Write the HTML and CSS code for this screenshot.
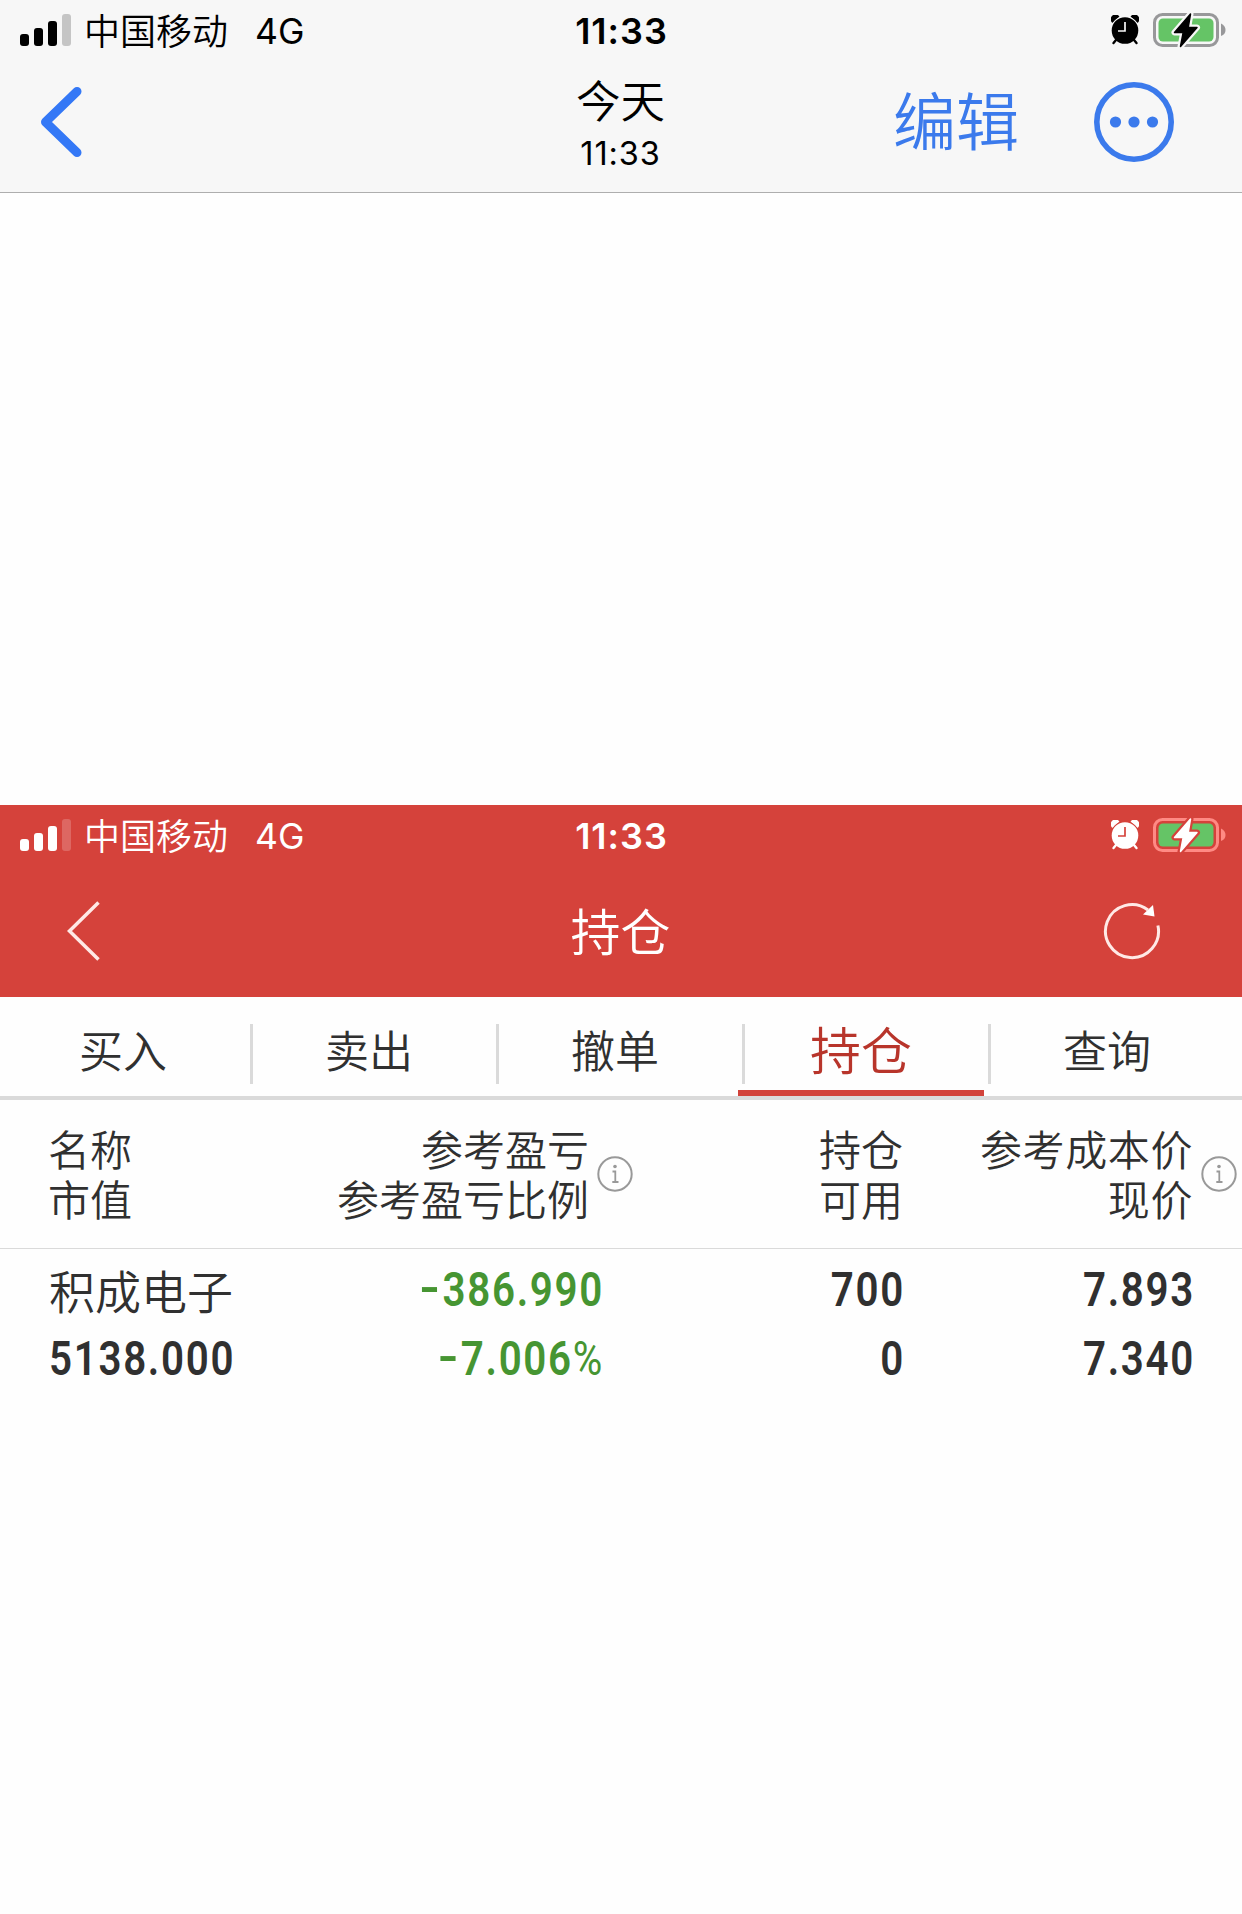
FILE: index.html
```
<!DOCTYPE html>
<html lang="zh-CN">
<head>
  <meta charset="UTF-8">
  <title>持仓</title>
  <link rel="stylesheet" href="styles.css">
</head>
<body>

<!-- shared status bar icons -->
<svg class="sprite">
  <symbol id="signal" viewBox="0 0 51 32">
    <rect x="0" y="20" width="9" height="12" rx="3"/>
    <rect x="14" y="14" width="9" height="18" rx="3"/>
    <rect x="28" y="7" width="9" height="25" rx="3"/>
    <rect x="42" y="0" width="9" height="32" rx="3" opacity="0.2"/>
  </symbol>
  <symbol id="alarm" viewBox="0 0 28 30">
    <path d="M1.500 7A4 4 0 0 1 7.500 1.500ZM26.500 7A4 4 0 0 0 20.500 1.500Z" stroke="currentColor" stroke-width="1.500" stroke-linejoin="round"/>
    <circle class="cut" cx="14" cy="15.500" r="13.600" stroke-width="1.500"/>
    <circle cx="14" cy="15.500" r="13.300"/>
    <path d="M5 25L2.500 28M23 25L25.500 28" stroke="currentColor" stroke-width="2.400" stroke-linecap="round"/>
    <path class="cut" d="M14 7V16H7" stroke-width="1.700"/>
  </symbol>
  <symbol id="battery" viewBox="0 0 76 36">
    <rect class="shell" x="2.500" y="2.500" width="63" height="31" rx="8" fill="none" stroke-width="3"/>
    <path class="tip" d="M69 11.500Q73.500 13.500 73.500 18T69 24Z"/>
    <rect x="6.500" y="6.500" width="55" height="23" rx="4.500" fill="#65c466"/>
    <path class="cut" d="M38.500 2L22.500 20.500H31.200L28.500 34.500L45 15.500H36.200Z" stroke-width="6" stroke-linejoin="round"/>
    <path d="M38.500 2L22.500 20.500H31.200L28.500 34.500L45 15.500H36.200Z" stroke="currentColor" stroke-width="1.500" stroke-linejoin="round"/>
  </symbol>
  <symbol id="info" viewBox="0 0 38 38">
    <circle cx="19" cy="19" r="16.700" fill="none" stroke="#999" stroke-width="2"/>
    <circle cx="19" cy="11.500" r="1.800" fill="#999"/>
    <path d="M16.500 16.500H19.300V27M16.300 27H22.500" fill="none" stroke="#999" stroke-width="1.800"/>
  </symbol>
</svg>

<header class="album">
  <div class="status">
    <div class="carrier">
      <svg class="signal"><use href="#signal"/></svg>
      <span>中国移动</span>
      <span class="network">4G</span>
    </div>
    <div class="clock">11:33</div>
    <div class="power">
      <svg class="alarm"><use href="#alarm"/></svg>
      <svg class="battery"><use href="#battery"/></svg>
    </div>
  </div>
  <div class="album-nav">
    <svg class="album-back" viewBox="0 0 48 76"><path d="M39 7.500L7.500 38L39 68.500"/></svg>
    <div class="album-title">
      <div class="day">今天</div>
      <div class="time">11:33</div>
    </div>
    <div class="album-actions">
      <span class="edit">编辑</span>
      <svg class="more" viewBox="0 0 80 80">
        <circle cx="40" cy="40" r="37.200" fill="none" stroke="#3b7aec" stroke-width="5.600"/>
        <circle cx="21.500" cy="40" r="5.600"/>
        <circle cx="40" cy="40" r="5.600"/>
        <circle cx="58.500" cy="40" r="5.600"/>
      </svg>
    </div>
  </div>
</header>

<main class="photo">
  <header class="app-head">
    <div class="status">
      <div class="carrier">
        <svg class="signal"><use href="#signal"/></svg>
        <span>中国移动</span>
        <span class="network">4G</span>
      </div>
      <div class="clock">11:33</div>
      <div class="power">
        <svg class="alarm"><use href="#alarm"/></svg>
        <svg class="battery"><use href="#battery"/></svg>
      </div>
    </div>
    <div class="app-nav">
      <svg class="app-back" viewBox="0 0 36 62"><path d="M32.500 2.500L3.500 31L32.500 59.500"/></svg>
      <h1>持仓</h1>
      <svg class="refresh" viewBox="0 0 60 60">
        <path d="M55.900 24.500A26.500 26.500 0 1 1 46 9" fill="none" stroke="#ffe9e6" stroke-width="3"/>
        <path d="M51 4L41 13.500L52.500 15.500Z" fill="#fff"/>
      </svg>
    </div>
  </header>

  <nav class="tabs">
    <div class="tab">买入</div>
    <div class="tab">卖出</div>
    <div class="tab">撤单</div>
    <div class="tab active">持仓</div>
    <div class="tab">查询</div>
  </nav>

  <section class="row labels">
    <div class="cell">名称<br>市值</div>
    <div class="cell">
      <div>参考盈亏<br>参考盈亏比例</div>
      <svg class="info"><use href="#info"/></svg>
    </div>
    <div class="cell">持仓<br>可用</div>
    <div class="cell wide">
      <div>参考成本价<br>现价</div>
      <svg class="info"><use href="#info"/></svg>
    </div>
  </section>

  <section class="row stock">
    <div class="cell">
      <div class="name">积成电子</div>
      <div class="num">5138.000</div>
    </div>
    <div class="cell down">
      <div class="num"><span class="minus">-</span>386.990</div>
      <div class="num"><span class="minus">-</span>7.006<span class="percent">%</span></div>
    </div>
    <div class="cell">
      <div class="num">700</div>
      <div class="num">0</div>
    </div>
    <div class="cell">
      <div class="num">7.893</div>
      <div class="num">7.340</div>
    </div>
  </section>
</main>

</body>
</html>
```
FILE: styles.css
```
* {
  box-sizing: border-box;
}
body {
  margin: 0;
  background: #fefefe;
  color: #303030;
  font-family: Inter, "Noto Sans CJK SC", sans-serif;
  font-weight: 350;
}
svg {
  display: block;
  fill: currentColor;
}
.sprite {
  position: absolute;
  width: 0;
  height: 0;
}

/* status bar */
.status {
  display: grid;
  grid-template-columns: 1fr auto 1fr;
  align-items: center;
  height: 60px;
  padding: 0 14px 0 20px;
}
.carrier {
  display: flex;
  align-items: center;
  font-size: 36px;
  line-height: 56px;
}
.carrier span {
  padding-top: 3px;
}
.signal {
  width: 51px;
  height: 32px;
  margin: 0 13px 0 0;
}
.network {
  margin-left: 27px;
  font-size: 35.5px;
  font-weight: 400;
}
.clock {
  font-size: 36px;
  line-height: 57px;
  font-weight: 600;
  letter-spacing: 1px;
  padding: 3px 5px 0 0;
}
.power {
  display: flex;
  justify-content: flex-end;
  align-items: center;
}
.alarm {
  width: 28px;
  height: 30px;
  margin-right: 13px;
}
.battery {
  width: 76px;
  height: 36px;
}
.cut {
  fill: none;
  stroke: var(--bar);
}
.shell {
  stroke: var(--shell);
}
.tip {
  fill: var(--shell);
}

/* photo album bar */
.album {
  --bar: #f7f7f7;
  --shell: #98989a;
  height: 193px;
  background: var(--bar);
  border-bottom: 1px solid #aeaeae;
  color: #000;
}
.album-nav {
  display: grid;
  grid-template-columns: 1fr auto 1fr;
  height: 132px;
  padding: 0 68px 0 38px;
}
.album-back {
  width: 48px;
  height: 76px;
  margin-top: 24px;
  fill: none;
  stroke: #3478f6;
  stroke-width: 9;
  stroke-linecap: round;
  stroke-linejoin: round;
}
.album-title {
  text-align: center;
  padding-left: 29px;
}
.day {
  font-size: 44.5px;
  line-height: 64px;
  padding-top: 10px;
}
.time {
  font-size: 32.5px;
  line-height: 40px;
  font-weight: 400;
  letter-spacing: 0.9px;
}
.album-actions {
  display: flex;
  justify-content: flex-end;
  color: #3b7aec;
}
.edit {
  font-size: 63px;
  line-height: 125px;
  margin-right: 75px;
}
.more {
  width: 80px;
  height: 80px;
  margin-top: 22px;
}

/* trading app */
.photo {
  padding-top: 612px;
}
.app-head {
  --bar: #d5423b;
  --shell: #ff8a84;
  height: 192px;
  background: var(--bar);
  color: #fff;
}
.app-nav {
  display: grid;
  grid-template-columns: 1fr auto 1fr;
  align-items: center;
  height: 132px;
  padding: 0 80px 0 66px;
}
.app-back {
  width: 36px;
  height: 62px;
  fill: none;
  stroke: #ffe9e6;
  stroke-width: 3.5;
}
h1 {
  margin: 0;
  padding: 0 0 4px 13px;
  font-size: 50px;
  font-weight: 350;
}
.refresh {
  width: 60px;
  height: 60px;
  justify-self: end;
}

.tabs {
  display: flex;
  height: 103px;
  border-bottom: 4px solid #dadada;
}
.tab {
  position: relative;
  width: 246px;
  font-size: 44px;
  line-height: 110px;
  text-align: center;
}
.tab:not(:last-child)::after {
  content: "";
  position: absolute;
  right: -7px;
  top: 27px;
  width: 3px;
  height: 60px;
  background: #dadada;
}
.tab.active {
  height: 99px;
  color: #b8352b;
  font-size: 51px;
  border-bottom: 6px solid #d2423a;
}

.row {
  display: grid;
  grid-template-columns: 250px 303px 301px 290px;
  padding: 0 49px;
}
.row .cell:not(:first-child) {
  text-align: right;
}
.labels {
  height: 149px;
  padding: 26px 48px 0 48px;
  border-bottom: 1px solid #dadada;
  font-size: 42px;
  line-height: 49.5px;
  grid-template-columns: 250px 303px 302px 290px;
}
.labels .cell {
  display: flex;
  justify-content: flex-end;
}
.labels .cell:first-child {
  justify-content: flex-start;
}
.labels .cell:nth-child(2) {
  padding-right: 12px;
}
.wide {
  letter-spacing: 0.6px;
}
.info {
  flex: none;
  width: 38px;
  height: 38px;
  margin: 29px -45px 0 7px;
}
.stock {
  padding-top: 8px;
}
.name {
  height: 67px;
  font-size: 46px;
  line-height: 70px;
}

/* narrow bold digits */
.num {
  height: 69px;
  font-family: Roboto, sans-serif;
  font-size: 48px;
  line-height: 66px;
  font-weight: 600;
  letter-spacing: 2px;
  margin-right: -2px;
  transform: scaleX(0.84);
  transform-origin: right;
}
.cell:first-child .num {
  transform-origin: left;
  padding-top: 2px;
}
.down {
  color: #469532;
}
.minus {
  display: inline-block;
  margin-right: 4px;
  transform: translateY(-2px) scaleX(1.4);
}
.percent {
  font-weight: 400;
}
```
